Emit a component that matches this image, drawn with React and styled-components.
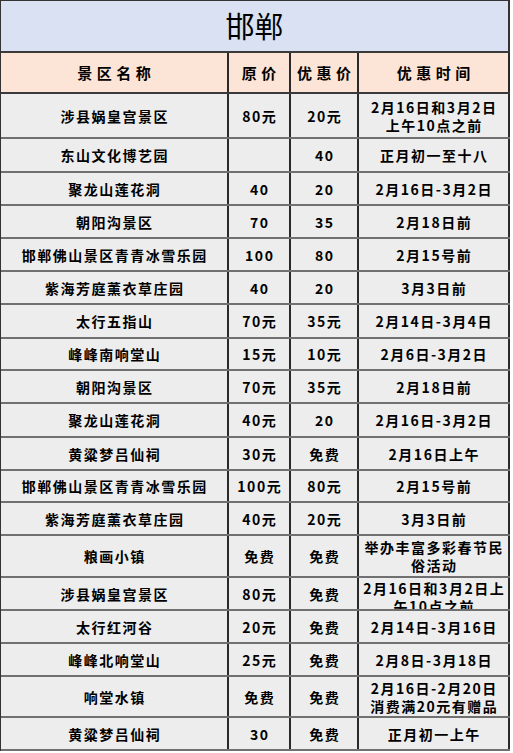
import React from 'react'
import styled, { createGlobalStyle } from 'styled-components'

const GlobalStyle = createGlobalStyle`
  * { box-sizing: border-box; }
  body {
    margin: 0;
    background: #ffffff;
    font-family: "Noto Sans CJK SC", "Noto Sans", sans-serif;
    color: #000;
  }
`

const COLS = '228px 62px 68px 151px'

const rows = [
  { h: 45, name: '涉县娲皇宫景区', orig: '80元', sale: '20元', time: ['2月16日和3月2日', '上午10点之前'] },
  { h: 34, name: '东山文化博艺园', orig: '', sale: '40', time: ['正月初一至十八'] },
  { h: 33, name: '聚龙山莲花洞', orig: '40', sale: '20', time: ['2月16日-3月2日'] },
  { h: 33, name: '朝阳沟景区', orig: '70', sale: '35', time: ['2月18日前'] },
  { h: 33, name: '邯郸佛山景区青青冰雪乐园', orig: '100', sale: '80', time: ['2月15号前'] },
  { h: 33, name: '紫海芳庭薰衣草庄园', orig: '40', sale: '20', time: ['3月3日前'] },
  { h: 34, name: '太行五指山', orig: '70元', sale: '35元', time: ['2月14日-3月4日'] },
  { h: 32, name: '峰峰南响堂山', orig: '15元', sale: '10元', time: ['2月6日-3月2日'] },
  { h: 33, name: '朝阳沟景区', orig: '70元', sale: '35元', time: ['2月18日前'] },
  { h: 34, name: '聚龙山莲花洞', orig: '40元', sale: '20', time: ['2月16日-3月2日'] },
  { h: 33, name: '黄粱梦吕仙祠', orig: '30元', sale: '免费', time: ['2月16日上午'] },
  { h: 32, name: '邯郸佛山景区青青冰雪乐园', orig: '100元', sale: '80元', time: ['2月15号前'] },
  { h: 33, name: '紫海芳庭薰衣草庄园', orig: '40元', sale: '20元', time: ['3月3日前'] },
  { h: 42, name: '粮画小镇', orig: '免费', sale: '免费', time: ['举办丰富多彩春节民', '俗活动'] },
  { h: 33, name: '涉县娲皇宫景区', orig: '80元', sale: '免费', time: ['2月16日和3月2日上', '午10点之前'], clip: true },
  { h: 33, name: '太行红河谷', orig: '20元', sale: '免费', time: ['2月14日-3月16日'] },
  { h: 33, name: '峰峰北响堂山', orig: '25元', sale: '免费', time: ['2月8日-3月18日'] },
  { h: 41, name: '响堂水镇', orig: '免费', sale: '免费', time: ['2月16日-2月20日', '消费满20元有赠品'] },
  { h: 33, name: '黄粱梦吕仙祠', orig: '30', sale: '免费', time: ['正月初一上午'] },
]

const App = () => {
  return (
    <>
      <GlobalStyle />
      <Sheet>
        <Title>邯郸</Title>
        <Row $h={41} $head>
          <HeadCell>景区名称</HeadCell>
          <HeadCell>原价</HeadCell>
          <HeadCell>优惠价</HeadCell>
          <HeadCell>优惠时间</HeadCell>
        </Row>
        {rows.map((r, i) => (
          <Row key={i} $h={r.h}>
            <Cell>{r.name}</Cell>
            <Cell>{r.orig}</Cell>
            <Cell>{r.sale}</Cell>
            <Cell $clip={r.clip}>
              {r.time.map((t, j) => <Line key={j}>{t}</Line>)}
            </Cell>
          </Row>
        ))}
      </Sheet>
    </>
  )
}

export default App

const Sheet = styled.div`
  width: 510px;
  display: flex;
  flex-direction: column;
  border-left: 1px solid #333;
  border-top: 1px solid #333;
`

const Title = styled.div`
  height: 52px;
  background: #d9e1f2;
  border-right: 2px solid #333;
  border-bottom: 2px solid #3a3a3a;
  display: flex;
  align-items: center;
  justify-content: center;
  font-size: 29px;
  font-weight: 400;
  letter-spacing: 0;
  padding-bottom: 2px;
`

const Row = styled.div`
  display: grid;
  grid-template-columns: ${COLS};
  height: ${p => p.$h}px;
  background: ${p => (p.$head ? '#fce4d6' : '#ededed')};
  border-bottom: 2px solid ${p => (p.$head ? '#3a3a3a' : '#707070')};
`

const Cell = styled.div`
  display: flex;
  flex-direction: column;
  align-items: center;
  justify-content: ${p => (p.$clip ? 'flex-start' : 'center')};
  padding-top: ${p => (p.$clip ? '1px' : '0')};
  overflow: hidden;
  border-right: 2px solid #2a2a2a;
  font-size: 14px;
  font-weight: 700;
  letter-spacing: 1.5px;
  line-height: 18px;
  white-space: nowrap;
  text-indent: 1.5px;
`

const HeadCell = styled(Cell)`
  font-size: 15px;
  letter-spacing: 4.5px;
  text-indent: 4.5px;
`

const Line = styled.span`
  display: block;
`
